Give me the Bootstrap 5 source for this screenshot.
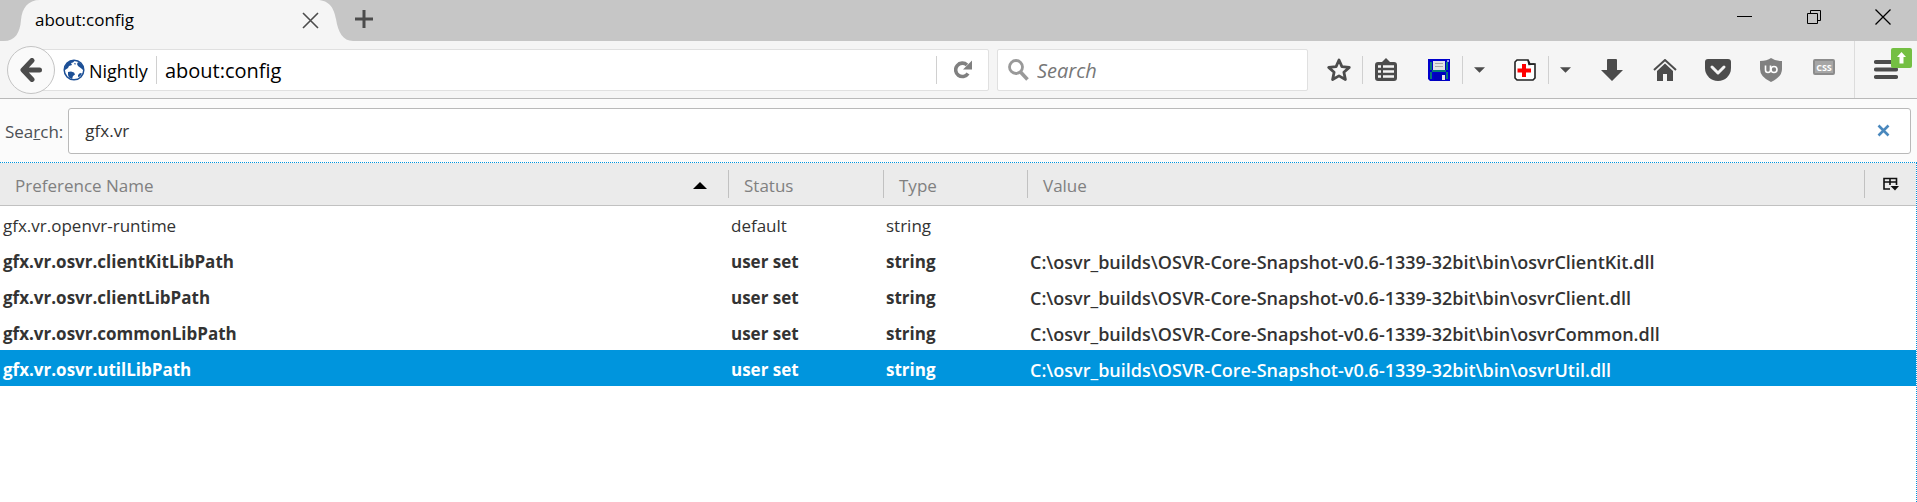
<!DOCTYPE html>
<html lang="en">
<head>
<meta charset="utf-8">
<meta name="viewport" content="width=device-width, initial-scale=1">
<title>about:config</title>
<link href="https://cdn.jsdelivr.net/npm/bootstrap@5.3.0/dist/css/bootstrap.min.css" rel="stylesheet">
<style>
  body { font-family: "Open Sans", "Noto Sans", sans-serif; font-size: 17px; line-height: 24px; color: #333; background: #fff; }
  svg { display: block; flex: none; }
  button { border: 0; background: none; padding: 0; color: inherit; display: flex; align-items: center; justify-content: center; }
  input { border: 0; background: none; outline: 0; padding: 0; min-width: 0; }
  .titlebar { background: #c6c6c6; height: 41px; }
  .tab-item { width: 353px; height: 41px; color: #000; }
  .tab-shape { position: absolute; left: 0; top: 0; }
  .tab-content-row { position: relative; height: 40px; padding: 0 34px 0 35px; }
  .tab-add { width: 22px; height: 38px; color: #4c4c4c; }
  .win-btn { width: 69px; height: 34px; color: #000; }
  .toolbar { background: #f5f5f5; height: 58px; border-bottom: 1px solid #b9b9b9; }
  .back { width: 48px; height: 48px; border: 1px solid #c4c4c4; border-radius: 50%; background: #fafafa; color: #4c4c4c; margin-left: 7px; z-index: 1; }
  .field { height: 42px; background: #fff; border: 1px solid #e0e0e0; border-radius: 2px; }
  .urlbar { margin-left: -18px; padding-left: 25px; color: #000; }
  .site-name { font-size: 18px; padding: 2px 8px 0 4px; }
  .url-text { font-size: 20px; color: #000; padding: 2px 0 0 8px; }
  .find { width: 311px; margin: 0 8px; padding-left: 10px; }
  .find input { font-size: 20px; padding-top: 2px; }
  .find input::placeholder { color: #777; font-style: italic; opacity: 1; }
  .vline { width: 1px; height: 28px; background: #d0d0d0; flex: none; }
  .vtall { height: 57px; background: #dcdcdc; }
  .reload { width: 51px; height: 40px; color: #808080; }
  .tool { height: 56px; width: 46px; color: #4c4c4c; }
  .tool-drop { width: 32px; }
  .tool-wide { width: 53px; }
  .tool-menu { width: 62px; position: relative; }
  .update { position: absolute; right: 5px; top: 6px; }
  .space { margin-left: 7px; }
  .space-sm { margin-left: 4px; }
  .filter { background: #fbfbfb; height: 63px; padding: 0 6px 0 5px; color: #4c5055; }
  .filter-label { padding: 2px 5px 0 0; }
  .filter-box { height: 46px; border: 1px solid #b9b9b9; border-radius: 3px; background: #fff; padding: 0 14px 0 16px; }
  .filter-box input { color: #333; }
  .clear { width: 26px; height: 40px; }
  .tree { border-top: 1px dotted #0095dd; border-right: 1px dotted #0095dd; min-height: calc(100vh - 162px); }
  .prefs { table-layout: fixed; width: 100%; border-collapse: separate; border-spacing: 0; }
  .prefs th { height: 43px; padding: 0; background: #ebebeb; border-bottom: 1px solid #c1c1c1; font-weight: 400; color: #808080; }
  .th-in { height: 28px; border-right: 1px solid #c1c1c1; padding: 3px 21px 0 15px; }
  .th-last { border: 0; padding: 0; }
  .prefs td { height: 36px; padding: 3px 0 0 2px; white-space: nowrap; overflow: hidden; }
  .prefs td:first-child { padding-left: 3px; }
  .userset td { font-weight: 700; }
  .userset .pref-value { font-size: 18px; font-weight: 600; }
  .chosen td { background: #0095dd; color: #fff; }
  .c-name { width: 729px; } .c-status { width: 155px; } .c-type { width: 144px; } .c-pick { width: 51px; }
</style>
</head>
<body>
<header>
  <div class="titlebar d-flex">
    <div class="tab-item position-relative">
      <svg class="tab-shape" width="353" height="41" viewBox="0 0 353 41"><path d="M0 41H4C15 41 20 33 21 20C22 8 28 0 40 0H317C330 0 334 9 336 19C338 32 343 41 353 41Z" fill="#f5f5f5"/></svg>
      <div class="tab-content-row d-flex align-items-center">
        <span class="flex-grow-1">about:config</span>
        <button type="button" aria-label="Close tab"><svg width="17" height="17" viewBox="0 0 17 17"><path d="M1 1L16 16M16 1L1 16" stroke="#4c4c4c" stroke-width="1.6"/></svg></button>
      </div>
    </div>
    <button type="button" class="tab-add" aria-label="New tab"><svg width="18" height="18" viewBox="0 0 18 18"><path d="M9 0V18M0 9H18" stroke="currentColor" stroke-width="3"/></svg></button>
    <div class="d-flex ms-auto">
      <button type="button" class="win-btn" aria-label="Minimize"><svg width="15" height="15" viewBox="0 0 15 15"><path d="M0 6.500H15" stroke="currentColor"/></svg></button>
      <button type="button" class="win-btn" aria-label="Restore"><svg width="14" height="14" viewBox="0 0 14 14" fill="none" stroke="currentColor"><path d="M.5 3.500H10.500V13.500H.5ZM3.500 3V.5H13.500V10.500H11"/></svg></button>
      <button type="button" class="win-btn" aria-label="Close"><svg width="16" height="16" viewBox="0 0 16 16"><path d="M.5 .5L15.500 15.500M15.500 .5L.5 15.500" stroke="currentColor" stroke-width="1.3"/></svg></button>
    </div>
  </div>

  <nav class="toolbar d-flex align-items-center" aria-label="Navigation">
    <button type="button" class="back flex-shrink-0" aria-label="Back"><svg width="22" height="24" viewBox="0 0 22 24"><path d="M12 2.500L3 12L12 21.500M4 12H19.500" fill="none" stroke="currentColor" stroke-width="5" stroke-linejoin="round" stroke-linecap="round"/></svg></button>
    <div class="field urlbar d-flex align-items-center flex-grow-1">
      <svg width="22" height="22" viewBox="0 0 22 22"><circle cx="11" cy="11" r="9.800" fill="#fff" stroke="#1c4f96" stroke-width="1.500"/><path d="M2 8L4 4L8 1.500L12 1.500L10 3.500L8 4L9 6L6 7L5 9L2 11ZM5 13L8 12.500L11 13.500L12 15.500L10 17L9 20L6 18.500L5 16ZM15 3L18 4.500L20.500 8L21 12L19 10L17 8.500L15 7L14 5ZM17 14L19 14.500L17 17.500L15 18L15 16ZM11 4L13 4.500L12 6Z" fill="#1c4f96"/></svg>
      <span class="site-name">Nightly</span>
      <span class="vline"></span>
      <input class="url-text flex-grow-1" type="text" value="about:config" aria-label="Address">
      <span class="vline"></span>
      <button type="button" class="reload" aria-label="Reload"><svg width="18" height="19" viewBox="0 0 18 19"><path d="M14 13.500A6.700 6.700 0 1 1 13 5" fill="none" stroke="currentColor" stroke-width="3.600"/><path d="M18 .5V9.500H9Z" fill="currentColor"/></svg></button>
    </div>
    <div class="field find d-flex align-items-center flex-shrink-0 gap-2">
      <svg width="21" height="22" viewBox="0 0 21 22" fill="none" stroke="#999"><circle cx="8" cy="8" r="6.500" stroke-width="2.800"/><path d="M12.500 13L19.500 20.500" stroke-width="3.600"/></svg>
      <input class="flex-grow-1" type="text" placeholder="Search" aria-label="Web search">
    </div>
    <div class="d-flex align-items-center flex-shrink-0">
      <button type="button" class="tool" aria-label="Bookmark"><svg width="26" height="26" viewBox="0 0 26 26"><path d="M13 3L15.900 9.600L23.300 10.400L17.900 15.300L19.400 22.500L13 18.900L6.600 22.500L8.100 15.300L2.700 10.400L10.100 9.600Z" fill="none" stroke="currentColor" stroke-width="2.800" stroke-linejoin="round"/></svg></button>
      <span class="vline"></span>
      <button type="button" class="tool" aria-label="Bookmarks list"><svg width="22" height="24" viewBox="0 0 22 24"><path d="M11 0L15 4H19Q22 4 22 7V20Q22 23 19 23H3Q0 23 0 20V7Q0 4 3 4H7Z" fill="currentColor"/><path d="M3 8.500H6M8 8.500H19M3 13.500H6M8 13.500H19M3 18.500H6M8 18.500H19" stroke="#f5f5f5" stroke-width="2.600"/></svg></button>
      <button type="button" class="tool space" aria-label="Save session"><svg width="22" height="22" viewBox="0 0 22 22"><path d="M0 0H22V22H2L0 20Z" fill="#00c"/><path d="M2 3V20H4V3ZM18 3V20H20V3ZM2 11H20V13H2Z" fill="#087878"/><path d="M5 2H17V11H5Z" fill="#e4e4e4"/><path d="M7 4.500H15M7 7.500H15" stroke="#aaa"/><path d="M6 14H17V22H6Z" fill="#00b"/><path d="M14 16H17V21H14Z" fill="#e4e4e4"/><path d="M19 1H21V3H19Z" fill="#99e"/></svg></button>
      <span class="vline"></span>
      <button type="button" class="tool tool-drop" aria-label="Save menu"><svg width="11" height="6" viewBox="0 0 12 6"><path d="M0 0H12L6 6Z" fill="currentColor"/></svg></button>
      <button type="button" class="tool space" aria-label="Restore session"><svg width="22" height="22" viewBox="0 0 22 22"><path d="M3 1H14L16 5H21V19L19 21H3L1 19V3Z" fill="#fff" stroke="#222" stroke-width="1.600"/><path d="M14 1L15 5.500L20.500 5" fill="none" stroke="#222" stroke-width="1.500"/><path d="M8 5H12V9.500H17V13.500H12V18H8V13.500H3.500V9.500H8Z" fill="#f00"/></svg></button>
      <span class="vline"></span>
      <button type="button" class="tool tool-drop" aria-label="Restore menu"><svg width="11" height="6" viewBox="0 0 12 6"><path d="M0 0H12L6 6Z" fill="currentColor"/></svg></button>
      <button type="button" class="tool tool-wide space-sm" aria-label="Downloads"><svg width="22" height="22" viewBox="0 0 22 22"><path d="M7 0H15Q16 0 16 1V11H22L11 22L0 11H6V1Q6 0 7 0Z" fill="currentColor"/></svg></button>
      <button type="button" class="tool tool-wide" aria-label="Home"><svg width="24" height="22" viewBox="0 0 24 22"><path d="M1 11L12 1L23 11" fill="none" stroke="currentColor" stroke-width="2"/><path d="M4 12L12 4.500L20 12V22H14V15H10V22H4Z" fill="currentColor"/></svg></button>
      <button type="button" class="tool tool-wide" aria-label="Pocket"><svg width="26" height="22" viewBox="0 0 26 22"><path d="M3 0H23Q26 0 26 3V9A13 13 0 0 1 0 9V3Q0 0 3 0Z" fill="currentColor"/><path d="M7 8L13 14L19 8" fill="none" stroke="#f5f5f5" stroke-width="3" stroke-linecap="round" stroke-linejoin="round"/></svg></button>
      <button type="button" class="tool tool-wide" aria-label="uBlock"><svg width="22" height="24" viewBox="0 0 22 24"><path d="M11 0Q15 3 22 3V11Q22 19 11 24Q0 19 0 11V3Q7 3 11 0Z" fill="#808080"/><path d="M5.500 7.500V12Q5.500 14.500 8 14.500Q10.500 14.500 10.500 12V7.500" fill="none" stroke="#fff" stroke-width="1.600"/><circle cx="14" cy="11.500" r="3" fill="none" stroke="#fff" stroke-width="1.600"/></svg></button>
      <button type="button" class="tool tool-wide" aria-label="CSS reload"><svg width="22" height="22" viewBox="0 0 22 22"><rect x="1" y="1" width="20" height="14" rx="1" fill="#a6a6a6" stroke="#8c8c8c" stroke-width="2"/><text x="11" y="12" text-anchor="middle" font-size="9" font-weight="700" fill="#fff">CSS</text></svg></button>
      <span class="vline vtall space-sm"></span>
      <button type="button" class="tool tool-menu" aria-label="Menu"><svg width="24" height="22" viewBox="0 0 24 22"><path d="M2 3H22M2 10.500H22M2 18H22" stroke="currentColor" stroke-width="4.200" stroke-linecap="round"/></svg>
        <svg class="update" width="21" height="20" viewBox="0 0 21 20"><rect width="21" height="20" rx="2" fill="#74bf43"/><path d="M10.500 4L15 9H12.500V15.500H8.500V9H6Z" fill="#fff"/></svg></button>
    </div>
  </nav>
</header>

<main>
  <div class="filter d-flex align-items-center">
    <label for="pref-filter" class="filter-label flex-shrink-0">Sea<u>r</u>ch:</label>
    <div class="filter-box d-flex align-items-center flex-grow-1">
      <input id="pref-filter" class="flex-grow-1" type="text" value="gfx.vr">
      <button type="button" class="clear" aria-label="Clear"><svg width="13" height="13" viewBox="0 0 13 13"><path d="M1.500 1.500L11.500 11.500M11.500 1.500L1.500 11.500" stroke="#4a88bd" stroke-width="2.600"/></svg></button>
    </div>
  </div>
  <div class="tree">
    <table class="prefs">
      <colgroup><col class="c-name"><col class="c-status"><col class="c-type"><col><col class="c-pick"></colgroup>
      <thead>
        <tr>
          <th scope="col"><div class="th-in d-flex align-items-center justify-content-between">Preference Name <svg width="14" height="7" viewBox="0 0 14 7"><path d="M7 0L14 7H0Z" fill="#000"/></svg></div></th>
          <th scope="col"><div class="th-in d-flex align-items-center">Status</div></th>
          <th scope="col"><div class="th-in d-flex align-items-center">Type</div></th>
          <th scope="col"><div class="th-in d-flex align-items-center">Value</div></th>
          <th scope="col"><div class="th-in th-last d-flex align-items-center justify-content-center"><button type="button" aria-label="Select columns"><svg width="16" height="14" viewBox="0 0 16 14"><path d="M7 12H1V1.500H13.500V8M1 5H14M7 1V8" fill="none" stroke="#111" stroke-width="1.600"/><path d="M7.500 9H16L12 13.500Z" fill="#111"/></svg></button></div></th>
        </tr>
      </thead>
      <tbody>
        <tr><td>gfx.vr.openvr-runtime</td><td>default</td><td>string</td><td></td><td></td></tr>
        <tr class="userset"><td>gfx.vr.osvr.clientKitLibPath</td><td>user set</td><td>string</td><td class="pref-value">C:\osvr_builds\OSVR-Core-Snapshot-v0.6-1339-32bit\bin\osvrClientKit.dll</td><td></td></tr>
        <tr class="userset"><td>gfx.vr.osvr.clientLibPath</td><td>user set</td><td>string</td><td class="pref-value">C:\osvr_builds\OSVR-Core-Snapshot-v0.6-1339-32bit\bin\osvrClient.dll</td><td></td></tr>
        <tr class="userset"><td>gfx.vr.osvr.commonLibPath</td><td>user set</td><td>string</td><td class="pref-value">C:\osvr_builds\OSVR-Core-Snapshot-v0.6-1339-32bit\bin\osvrCommon.dll</td><td></td></tr>
        <tr class="userset chosen"><td>gfx.vr.osvr.utilLibPath</td><td>user set</td><td>string</td><td class="pref-value">C:\osvr_builds\OSVR-Core-Snapshot-v0.6-1339-32bit\bin\osvrUtil.dll</td><td></td></tr>
      </tbody>
    </table>
  </div>
</main>
<script src="https://cdn.jsdelivr.net/npm/bootstrap@5.3.0/dist/js/bootstrap.bundle.min.js"></script>
</body>
</html>
